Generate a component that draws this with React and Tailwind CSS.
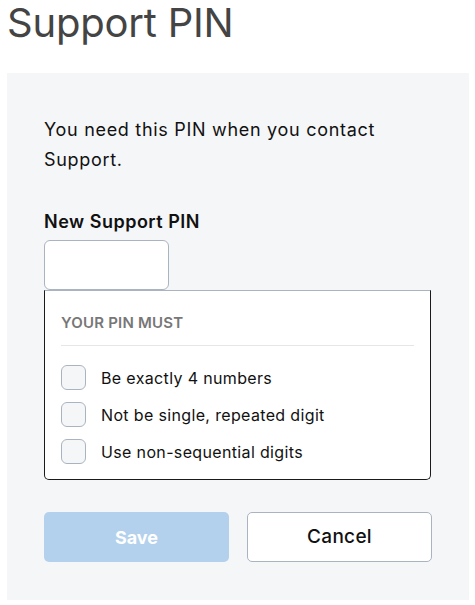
export default function App() {
  const rules = ['Be exactly 4 numbers', 'Not be single, repeated digit', 'Use non-sequential digits'];

  return (
    <div className="w-[475px] h-[605px] bg-white overflow-hidden" style={{ fontFamily: 'Inter, "Noto Sans", sans-serif' }}>
      {/* Title */}
      <div className="h-[73px] pl-[7px] pt-[3px]">
        <h1 className="text-[40px] leading-[40px] font-normal text-[#444444] tracking-[-0.2px]">
          Support PIN
        </h1>
      </div>

      {/* Panel */}
      <div className="ml-[7px] w-[462px] h-[527px] bg-[#f5f6f8] pl-[37px] pr-[30px] pt-[42px]">
        <p className="text-[18px] leading-[30px] tracking-[0.7px] text-[#111111] w-[380px]">
          You need this PIN when you contact Support.
        </p>

        <label className="block mt-[35px] text-[18px] leading-[24px] tracking-[0.5px] font-semibold text-[#111111]">
          New Support PIN
        </label>
        <input className="mt-[6px] block w-[125px] h-[50px] bg-white border border-[#aab4c0] rounded-[6px] outline-none" />

        {/* Requirements */}
        <div className="w-[387px] h-[190px] bg-white border border-[#1a1a1a] border-t-[#aab4c0] rounded-b-[5px] px-[16px]">
          <div className="pt-[23px] pb-[14px] border-b border-[#e4e6e8] text-[15px] leading-[17px] font-semibold text-[#777777] tracking-[0.2px]">
            YOUR PIN MUST
          </div>
          <div className="pt-[19px] flex flex-col gap-[12px]">
            {rules.map((r) => (
              <div key={r} className="flex items-center h-[25px]">
                <span className="w-[25px] h-[25px] rounded-[6px] border border-[#aab4c0] bg-[#f5f6f8]" />
                <span className="ml-[15px] text-[16px] leading-[20px] tracking-[0.35px] text-[#111111]">{r}</span>
              </div>
            ))}
          </div>
        </div>

        {/* Actions */}
        <div className="mt-[32px] flex gap-[18px]">
          <button className="w-[185px] h-[50px] rounded-[5px] bg-[#b3d1ec] text-white text-[18px] font-bold">
            Save
          </button>
          <button className="w-[185px] h-[50px] rounded-[5px] bg-white border border-[#aab4c0] text-[#111111] text-[19px] tracking-[0.3px] font-medium">
            Cancel
          </button>
        </div>
      </div>
    </div>
  );
}
